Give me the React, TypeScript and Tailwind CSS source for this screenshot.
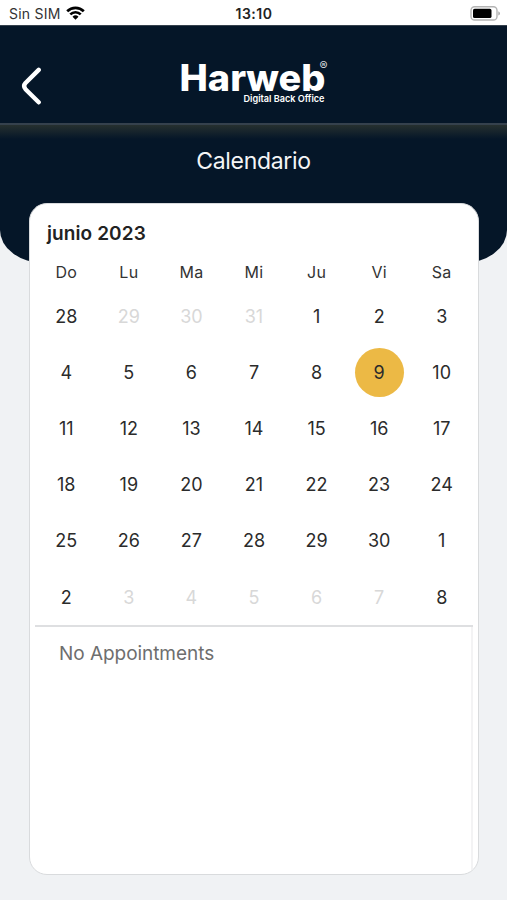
import clsx from 'clsx';

const weekDays = ['Do', 'Lu', 'Ma', 'Mi', 'Ju', 'Vi', 'Sa'];

const SELECTED_DAY = 12;

const disabledDays = [1, 2, 3, 36, 37, 38, 39, 40];

const days = [
  28, 29, 30, 31, 1, 2, 3,
  4, 5, 6, 7, 8, 9, 10,
  11, 12, 13, 14, 15, 16, 17,
  18, 19, 20, 21, 22, 23, 24,
  25, 26, 27, 28, 29, 30, 1,
  2, 3, 4, 5, 6, 7, 8,
];

function StatusBar() {
  return (
    <div className="grid h-[25px] grid-cols-3 items-center bg-white pl-[9px] pr-[7px] pt-[2px] text-[#222]">
      <div className="flex items-center gap-[5px]">
        <span className="text-[14px] leading-none tracking-[0.25px] text-[#333]">Sin SIM</span>
        <svg width="19" height="14" viewBox="0 0 19 14" className="-mt-[2px]" aria-hidden="true">
          <g fill="none" stroke="#000" strokeWidth="2.7">
            <path d="M1.2 5.2a11.8 11.8 0 0 1 16.6 0" />
            <path d="M4.3 8.4a7.4 7.4 0 0 1 10.4 0" />
          </g>
          <path d="M9.5 13.7 6.5 10.8a4.3 4.3 0 0 1 6 0z" fill="#000" />
        </svg>
      </div>
      <span className="-ml-[1px] text-center text-[14px] font-semibold leading-none tracking-[0.5px]">13:10</span>
      <div className="flex justify-end">
        <svg width="30" height="15" viewBox="0 0 30 15" className="-mt-[1px]" aria-hidden="true">
          <rect x="1" y="0.8" width="26" height="13.2" rx="3.6" fill="none" stroke="#b4b4b4" strokeWidth="1.4" />
          <rect x="3" y="2.8" width="18.5" height="9.2" rx="1.6" fill="#000" />
          <path d="M28.3 5.2Q30 6 30 7.4T28.3 9.6Z" fill="#aaa" />
        </svg>
      </div>
    </div>
  );
}

function Logo() {
  return (
    <svg width="152" height="50" viewBox="0 0 152 50" className="text-white" fill="currentColor">
      <text x="1.5" y="34.5" fontSize="37" fontWeight="800" textLength="146" lengthAdjust="spacingAndGlyphs">
        Harweb
      </text>
      <text x="141.5" y="14" fontSize="12" fillOpacity="0.85">®</text>
      <text x="65.5" y="45.5" fontSize="9.5" fontWeight="600" textLength="81" lengthAdjust="spacingAndGlyphs">
        Digital Back Office
      </text>
    </svg>
  );
}

function Header() {
  return (
    <header className="relative flex h-[100px] justify-center border-b-2 border-t border-b-[#35414d] border-t-[#35414d] pt-[30px]">
      <button className="absolute left-[20px] top-[40px]" aria-label="Volver">
        <svg width="24" height="40" viewBox="0 0 24 40" fill="none" stroke="#fff" strokeWidth="4.4" strokeLinecap="round" strokeLinejoin="round">
          <path d="M18.7 3.9 5.5 17Q2.8 20 5.5 23.2L18.7 36.3" />
        </svg>
      </button>
      <Logo />
    </header>
  );
}

function Calendar() {
  return (
    <section className="px-[5px]">
      <h2 className="pl-[12px] pt-[18px] text-[19px] font-semibold leading-[24px] tracking-[0.1px] text-[#222]">
        junio 2023
      </h2>
      <div className="mt-[15px] grid grid-cols-7 text-center text-[16px] leading-[22px] tracking-[0.3px] text-[#333]">
        {weekDays.map((day) => (
          <span key={day}>{day}</span>
        ))}
      </div>
      <div className="mt-[5px] grid auto-rows-[56.2px] grid-cols-7 place-items-center border-b-2 border-[#dedfe1] text-[18px] text-[#2b2b2b]">
        {days.map((day, index) => (
          <span
            key={index}
            className={clsx(
              'flex size-[49px] items-center justify-center rounded-full',
              index === SELECTED_DAY && 'bg-[#ecb945]',
              disabledDays.includes(index) && 'text-[#d8d8d8]'
            )}
          >
            {day}
          </span>
        ))}
      </div>
    </section>
  );
}

function App() {
  return (
    <div className="flex h-[900px] w-[507px] flex-col overflow-hidden bg-[#f0f2f4] font-['Inter','Liberation_Sans',sans-serif]">
      <StatusBar />
      <div className="h-[238px] shrink-0 [border-radius:0_0_44px_44px/0_0_33px_33px] bg-[#051628]">
        <Header />
        <div className="h-[100px] bg-[linear-gradient(to_bottom,#26302f,#051628_14px)] pt-[22px] text-center">
          <h1 className="text-[23px] leading-[28px] tracking-[-0.3px] text-[#f4f5f6]">Calendario</h1>
        </div>
      </div>
      <main className="z-10 ml-[29px] mr-[28px] -mt-[60px] flex h-[672px] shrink-0 flex-col overflow-hidden rounded-[18px] border border-[#d9dbdd] bg-white">
        <Calendar />
        <div className="mx-[5px] flex-1 border-r-2 border-[#f3f3f4] pl-[24px] pt-[14px] text-[19px] leading-[26px] tracking-[-0.05px] text-[#6e6e6e]">
          No Appointments
        </div>
      </main>
    </div>
  );
}

export default App;
